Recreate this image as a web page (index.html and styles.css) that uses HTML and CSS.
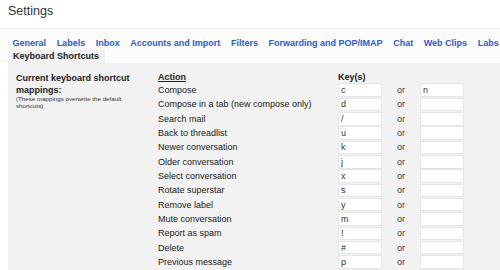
FILE: index.html
```html
<!DOCTYPE html>
<html lang="en">
<head>
  <meta charset="UTF-8" />
  <title>Settings</title>
  <link rel="stylesheet" href="styles.css">
</head>
<body>
  <h1 class="title">Settings</h1>

  <div class="tabs">
    <a href="#">General</a>
    <a href="#">Labels</a>
    <a href="#">Inbox</a>
    <a href="#">Accounts and Import</a>
    <a href="#">Filters</a>
    <a href="#">Forwarding and POP/IMAP</a>
    <a href="#">Chat</a>
    <a href="#">Web Clips</a>
    <a href="#">Labs</a>
  </div>
  <div class="tab-row">
    <span class="tab-active">Keyboard Shortcuts</span>
  </div>

  <div class="panel">
    <div class="side">
      <b>Current keyboard shortcut mappings:</b>
      <small>(These mappings overwrite the default shortcuts)</small>
    </div>

    <div class="keys">
      <div class="head action">Action</div>
      <div class="head">Key(s)</div>
      <div></div>
      <div></div>

      <div>Compose</div><input value="c"><span class="or">or</span><input value="n">
      <div>Compose in a tab (new compose only)</div><input value="d"><span class="or">or</span><input>
      <div>Search mail</div><input value="/"><span class="or">or</span><input>
      <div>Back to threadlist</div><input value="u"><span class="or">or</span><input>
      <div>Newer conversation</div><input value="k"><span class="or">or</span><input>
      <div>Older conversation</div><input value="j"><span class="or">or</span><input>
      <div>Select conversation</div><input value="x"><span class="or">or</span><input>
      <div>Rotate superstar</div><input value="s"><span class="or">or</span><input>
      <div>Remove label</div><input value="y"><span class="or">or</span><input>
      <div>Mute conversation</div><input value="m"><span class="or">or</span><input>
      <div>Report as spam</div><input value="!"><span class="or">or</span><input>
      <div>Delete</div><input value="#"><span class="or">or</span><input>
      <div>Previous message</div><input value="p"><span class="or">or</span><input>
    </div>
  </div>
</body>
</html>
```

FILE: styles.css
```css
body {
  margin: 0;
  font-family: "Liberation Sans", Arial, sans-serif;
  color: #222;
  background: white;
}
.title {
  margin: 0;
  height: 23px;
  padding: 5px 0 0 8px;
  font-size: 12.5px;
  line-height: 12.5px;
  font-weight: normal;
  color: #333;
  border-bottom: 1px solid #ebebeb;
}
.tabs {
  display: flex;
  gap: 10.6px;
  padding: 9px 0 1px 12.5px;
  background: #fcfcfc;
  white-space: nowrap;
}
.tabs a {
  font-size: 9px;
  line-height: 11px;
  font-weight: bold;
  color: #2a5bd7;
  text-decoration: none;
}
.tab-row {
  display: flex;
  padding-left: 8px;
  background: #fcfcfc;
}
.tab-active {
  padding: 1px 6px 1px 5px;
  font-size: 9px;
  line-height: 11px;
  font-weight: bold;
  color: #222;
  background: #f2f2f2;
}
.panel {
  display: flex;
  margin-left: 8px;
  padding: 9px 0 0 8px;
  height: 200px;
  background: #f2f2f2;
}
.side {
  width: 142px;
  padding-top: 1px;
}
.side b {
  display: block;
  font-size: 9px;
  line-height: 11.7px;
}
.side small {
  display: block;
  font-size: 6.2px;
  line-height: 6.4px;
  color: #333;
  width: 110px;
}
.keys {
  display: grid;
  grid-template-columns: 180px 44px 38px 44px;
  grid-template-rows: 11px;
  grid-auto-rows: 14.33px;
  align-items: center;
  font-size: 9px;
  color: #222;
}
.head {
  font-weight: bold;
  line-height: 11px;
}
.action {
  text-decoration: underline;
}
.keys input {
  box-sizing: border-box;
  width: 44px;
  height: 13.4px;
  margin: 0;
  padding: 0 0 0 2px;
  border: 1px solid #e6e6e6;
  background: white;
  font-family: "Liberation Sans", Arial, sans-serif;
  font-size: 9px;
  color: #333;
  outline: none;
}
.or {
  text-align: center;
  color: #444;
}
```
